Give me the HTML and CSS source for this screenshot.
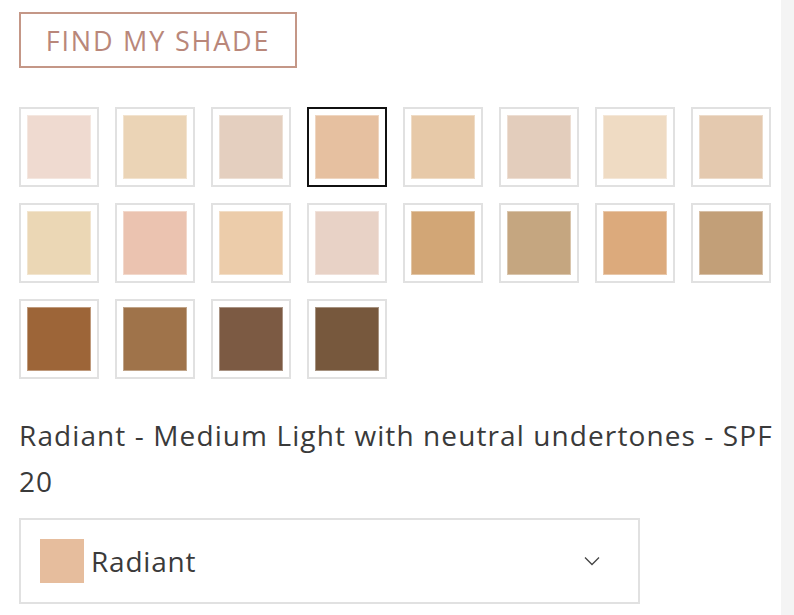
FILE: index.html
```html
<!DOCTYPE html>
<html lang="en">
<head>
<meta charset="utf-8">
<title>Shade picker</title>
<link rel="stylesheet" href="styles.css">
</head>
<body>
<div class="page">
	<div class="picker">
		<button class="find-btn" type="button">FIND MY SHADE</button>

		<ul class="shades">
			<li class="shade"><span class="chip c1"></span></li>
			<li class="shade"><span class="chip c2"></span></li>
			<li class="shade"><span class="chip c3"></span></li>
			<li class="shade active"><span class="chip c4"></span></li>
			<li class="shade"><span class="chip c5"></span></li>
			<li class="shade"><span class="chip c6"></span></li>
			<li class="shade"><span class="chip c7"></span></li>
			<li class="shade"><span class="chip c8"></span></li>
			<li class="shade"><span class="chip c9"></span></li>
			<li class="shade"><span class="chip c10"></span></li>
			<li class="shade"><span class="chip c11"></span></li>
			<li class="shade"><span class="chip c12"></span></li>
			<li class="shade"><span class="chip c13"></span></li>
			<li class="shade"><span class="chip c14"></span></li>
			<li class="shade"><span class="chip c15"></span></li>
			<li class="shade"><span class="chip c16"></span></li>
			<li class="shade"><span class="chip c17"></span></li>
			<li class="shade"><span class="chip c18"></span></li>
			<li class="shade"><span class="chip c19"></span></li>
			<li class="shade"><span class="chip c20"></span></li>
		</ul>

		<p class="shade-name">Radiant - Medium Light with neutral undertones - SPF 20</p>

		<div class="select">
			<span class="select-chip"></span>
			<span class="select-label">Radiant</span>
			<svg class="select-arrow" width="16" height="10" viewBox="0 0 16 10"><path d="M1 1.5 L8 8.5 L15 1.5" fill="none" stroke="#444" stroke-width="1.3"/></svg>
		</div>
	</div>
	<div class="track"></div>
</div>
</body>
</html>
```

FILE: styles.css
```css
*{ margin:0; padding:0; box-sizing:border-box;}
html, body{ height:100%;}
body{ font-family:"Open Sans", "Liberation Sans", sans-serif; color:#3a3a3a; background:#fff;}
li{ list-style:none;}

.page{ display:flex; height:100%;}
.picker{ flex:1; padding:12px 0 0 19px;}
.track{ width:13px; background:#f4f4f4;}

.find-btn{ display:block; width:278px; height:56px; border:2px solid #c49787; background:#fff; color:#b9877a; font-family:inherit; font-size:27px; letter-spacing:1.8px; padding-top:1px;}

.shades{ display:grid; grid-template-columns:repeat(8, 80px); grid-auto-rows:80px; gap:16px; margin-top:39px;}
.shade{ border:2px solid #e1e1e1; padding:6px; background:#fff;}
.shade.active{ border-color:#111;}
.chip{ display:block; width:100%; height:100%; box-shadow:inset 0 0 0 1px rgba(255,255,255,0.35);}

.c1{ background:#efdad0;}
.c2{ background:#ebd4b6;}
.c3{ background:#e4cfbf;}
.c4{ background:#e6c0a0;}
.c5{ background:#e7c9a8;}
.c6{ background:#e3cdbc;}
.c7{ background:#efdbc3;}
.c8{ background:#e4c9af;}
.c9{ background:#ebd7b5;}
.c10{ background:#ebc3b0;}
.c11{ background:#ecccaa;}
.c12{ background:#e8d2c6;}
.c13{ background:#d2a676;}
.c14{ background:#c5a680;}
.c15{ background:#dcaa7c;}
.c16{ background:#c29f78;}
.c17{ background:#9d6538;}
.c18{ background:#9f734a;}
.c19{ background:#7c5a43;}
.c20{ background:#77583d;}

.shade-name{ margin-top:33px; font-size:28px; letter-spacing:1.1px; line-height:46px; padding-right:4px; color:#3a3a3a;}

.select{ display:flex; align-items:center; width:621px; height:86px; margin-top:14px; border:2px solid #e1e1e1; padding:0 38px 0 19px;}
.select-chip{ width:44px; height:44px; background:#e6bd9d; margin-right:7px;}
.select-label{ flex:1; font-size:28px; letter-spacing:0.8px;}
.select-arrow{ display:block;}
```
